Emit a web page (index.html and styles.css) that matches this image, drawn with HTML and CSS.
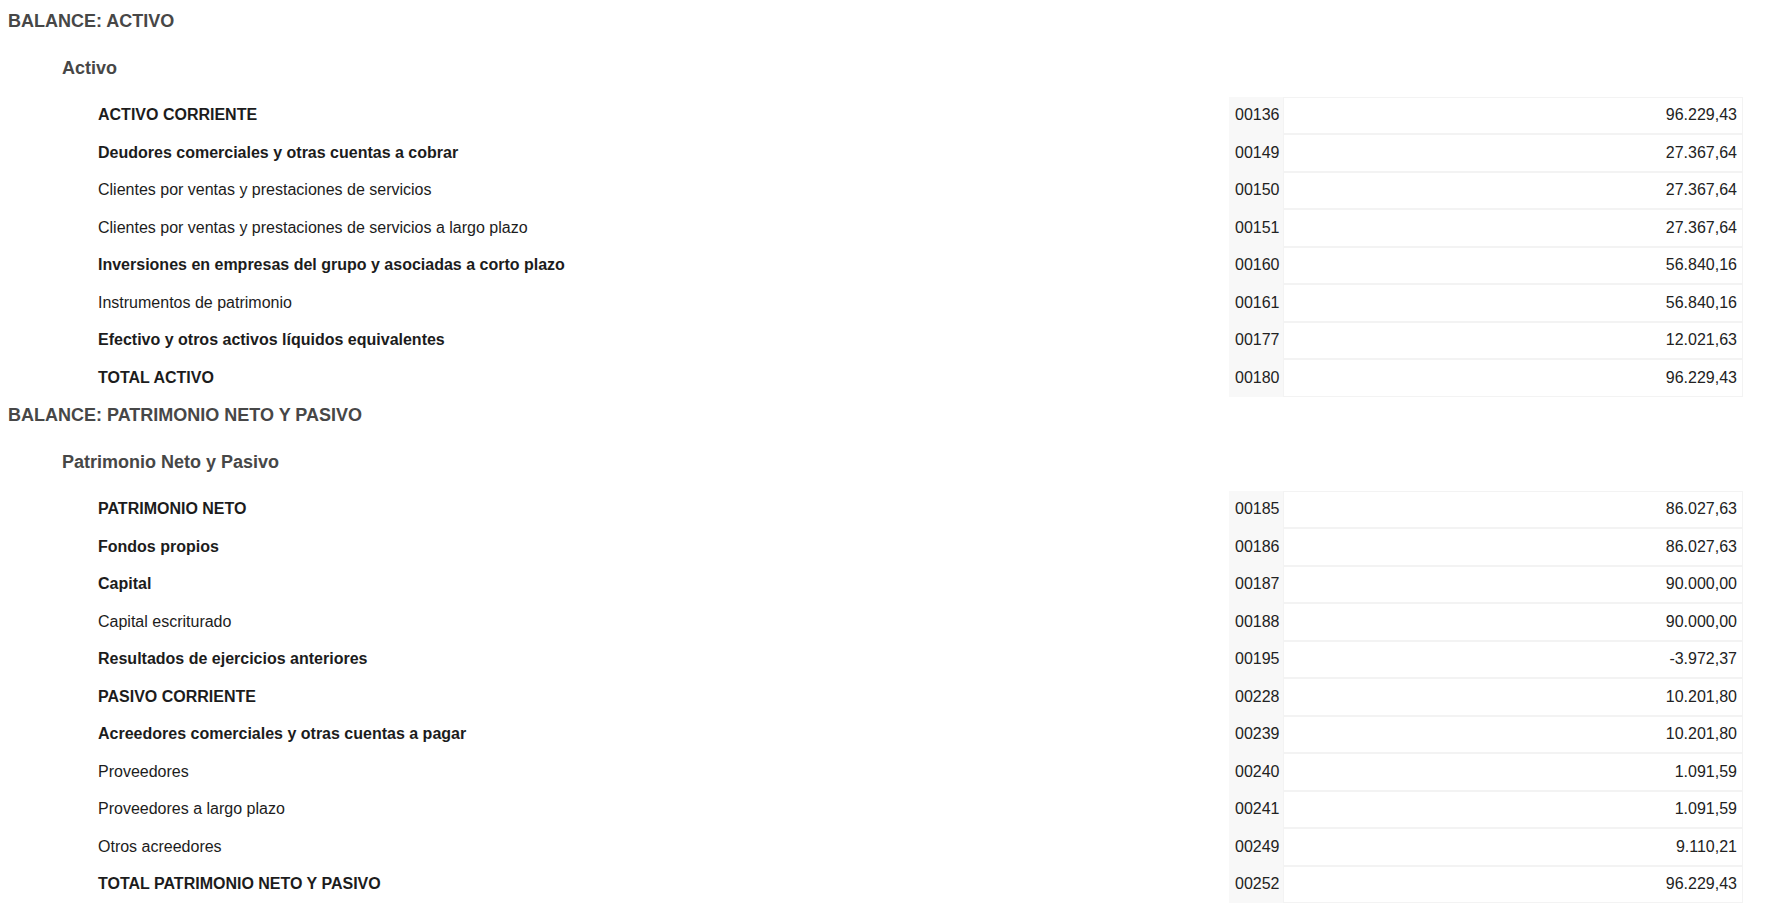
FILE: index.html
```html
<!DOCTYPE html>
<html lang="es">
<head>
<meta charset="utf-8">
<title>Balance</title>
<link rel="stylesheet" href="styles.css">
</head>
<body>
<section class="section">
  <h2 class="section-title">BALANCE: ACTIVO</h2>
  <h3 class="section-sub">Activo</h3>
  <div class="rows">
    <div class="row"><div class="label bold">ACTIVO CORRIENTE</div><div class="code">00136</div><div class="value">96.229,43</div></div>
    <div class="row"><div class="label bold">Deudores comerciales y otras cuentas a cobrar</div><div class="code">00149</div><div class="value">27.367,64</div></div>
    <div class="row"><div class="label">Clientes por ventas y prestaciones de servicios</div><div class="code">00150</div><div class="value">27.367,64</div></div>
    <div class="row"><div class="label">Clientes por ventas y prestaciones de servicios a largo plazo</div><div class="code">00151</div><div class="value">27.367,64</div></div>
    <div class="row"><div class="label bold">Inversiones en empresas del grupo y asociadas a corto plazo</div><div class="code">00160</div><div class="value">56.840,16</div></div>
    <div class="row"><div class="label">Instrumentos de patrimonio</div><div class="code">00161</div><div class="value">56.840,16</div></div>
    <div class="row"><div class="label bold">Efectivo y otros activos líquidos equivalentes</div><div class="code">00177</div><div class="value">12.021,63</div></div>
    <div class="row"><div class="label bold">TOTAL ACTIVO</div><div class="code">00180</div><div class="value">96.229,43</div></div>
  </div>
</section>
<section class="section">
  <h2 class="section-title">BALANCE: PATRIMONIO NETO Y PASIVO</h2>
  <h3 class="section-sub">Patrimonio Neto y Pasivo</h3>
  <div class="rows">
    <div class="row"><div class="label bold">PATRIMONIO NETO</div><div class="code">00185</div><div class="value">86.027,63</div></div>
    <div class="row"><div class="label bold">Fondos propios</div><div class="code">00186</div><div class="value">86.027,63</div></div>
    <div class="row"><div class="label bold">Capital</div><div class="code">00187</div><div class="value">90.000,00</div></div>
    <div class="row"><div class="label">Capital escriturado</div><div class="code">00188</div><div class="value">90.000,00</div></div>
    <div class="row"><div class="label bold">Resultados de ejercicios anteriores</div><div class="code">00195</div><div class="value">-3.972,37</div></div>
    <div class="row"><div class="label bold">PASIVO CORRIENTE</div><div class="code">00228</div><div class="value">10.201,80</div></div>
    <div class="row"><div class="label bold">Acreedores comerciales y otras cuentas a pagar</div><div class="code">00239</div><div class="value">10.201,80</div></div>
    <div class="row"><div class="label">Proveedores</div><div class="code">00240</div><div class="value">1.091,59</div></div>
    <div class="row"><div class="label">Proveedores a largo plazo</div><div class="code">00241</div><div class="value">1.091,59</div></div>
    <div class="row"><div class="label">Otros acreedores</div><div class="code">00249</div><div class="value">9.110,21</div></div>
    <div class="row"><div class="label bold">TOTAL PATRIMONIO NETO Y PASIVO</div><div class="code">00252</div><div class="value">96.229,43</div></div>
  </div>
</section>
</body>
</html>
```
FILE: styles.css
```css
html, body {
  background: #ffffff;
}
body {
  margin: 8px;
  font-family: "Liberation Sans", Arial, sans-serif;
  color: #222222;
}
.section {
  margin-bottom: 5.5px;
}
.section-title {
  margin: 0;
  padding-top: 2.5px;
  font-size: 18px;
  font-weight: bold;
  color: #474747;
  line-height: normal;
}
.section-sub {
  margin: 26px 0 0 0;
  padding-left: 54px;
  font-size: 18px;
  font-weight: bold;
  color: #474747;
  line-height: normal;
}
.rows {
  margin-top: 18px;
  margin-right: 19px;
}
.row {
  display: grid;
  grid-template-columns: 1fr 54px 460px;
  height: 37.5px;
  font-size: 16px;
}
.label {
  display: flex;
  align-items: center;
  padding-left: 90px;
  color: #1c1c1c;
}
.bold {
  font-weight: bold;
}
.code {
  display: flex;
  align-items: center;
  padding-left: 6px;
  background: #f8f8f8;
  color: #222222;
}
.value {
  display: flex;
  align-items: center;
  justify-content: flex-end;
  padding-right: 5px;
  border: 1px solid #f3f3f3;
  color: #222222;
}
```
